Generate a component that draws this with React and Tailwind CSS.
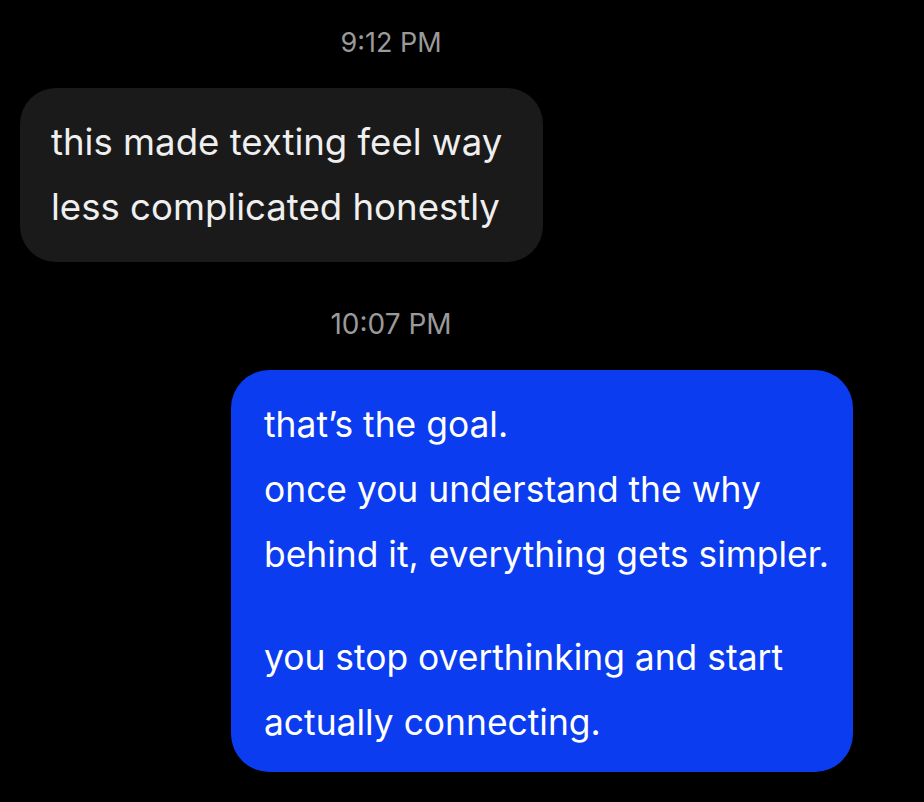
export default function App() {
  return (
    <div className="w-[924px] h-[802px] bg-black overflow-hidden flex flex-col font-['Inter','Liberation_Sans',sans-serif]">
      <div className="w-[782px] pt-[27px] text-center text-[27px] leading-[32px] text-[#9a9a9a]">
        9:12 PM
      </div>
      <div className="mt-[29px] ml-[20px] w-[523px] h-[174px] rounded-[36px] bg-[#1a1a1a] pl-[31px] pt-[22px] text-[36.6px] leading-[65px] text-[#efefef] whitespace-nowrap">
        this made texting feel way
        <br />
        less complicated honestly
      </div>
      <div className="mt-[46px] w-[782px] text-center text-[28px] leading-[32px] text-[#9a9a9a]">
        10:07 PM
      </div>
      <div className="mt-[30px] ml-[231px] w-[622px] h-[402px] rounded-[38px] bg-[#0b3cf0] pl-[33px] pt-[22px] text-[35.4px] leading-[65px] text-white whitespace-nowrap">
        <p>
          that’s the goal.
          <br />
          once you understand the why
          <br />
          behind it, everything gets simpler.
        </p>
        <p className="mt-[38px]">
          you stop overthinking and start
          <br />
          actually connecting.
        </p>
      </div>
    </div>
  );
}
